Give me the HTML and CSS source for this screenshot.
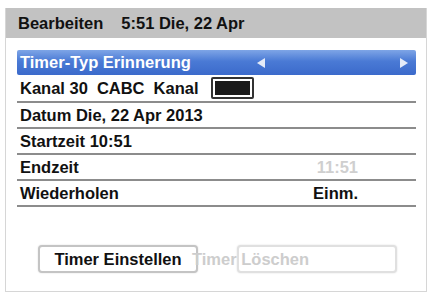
FILE: index.html
```html
<!DOCTYPE html>
<html lang="de">
<head>
    <meta charset="UTF-8">
    <meta name="viewport" content="width=device-width, initial-scale=1.0">
    <title>Timer Bearbeiten</title>
    <link rel="stylesheet" href="styles.css">
</head>
<body>

<div class="panel">
    <div class="title">Bearbeiten<span class="clock">5:51 Die, 22 Apr</span></div>

    <div class="list">
        <div class="row selected">
            <span>Timer-Typ Erinnerung</span>
            <span class="arrow arrow-left"></span>
            <span class="arrow arrow-right"></span>
        </div>
        <div class="row row-channel">
            <span>Kanal 30<span class="sp"></span>CABC<span class="sp"></span>Kanal</span>
            <span class="swatch"><span class="swatch-fill"></span></span>
        </div>
        <div class="row">
            <span>Datum Die, 22 Apr 2013</span>
        </div>
        <div class="row">
            <span>Startzeit 10:51</span>
        </div>
        <div class="row">
            <span>Endzeit</span>
            <span class="value disabled">11:51</span>
        </div>
        <div class="row">
            <span>Wiederholen</span>
            <span class="value">Einm.</span>
        </div>
    </div>

    <div class="buttons">
        <button class="btn">Timer Einstellen</button>
        <button class="btn btn-delete">Timer Löschen</button>
    </div>
</div>

</body>
</html>
```

FILE: styles.css
```css
body {
    margin: 0;
    background-color: #fff;
    font-family: "Liberation Sans", Arial, sans-serif;
    font-size: 16.5px;
    font-weight: bold;
    color: #111;
}
.panel {
    margin: 8px 4px 0 5px;
    height: 284px;
    box-sizing: border-box;
    border: 1px solid #d6d6d6;
    border-top: none;
    display: flex;
    flex-direction: column;
}
.title {
    height: 30px;
    display: flex;
    align-items: center;
    padding-left: 12px;
    background-color: #c2c2c2;
    font-size: 16.5px;
}
.clock {
    margin-left: 18px;
}
.list {
    margin-top: 12px;
    padding: 0 10px 0 11px;
}
.row {
    height: 24px;
    display: flex;
    align-items: center;
    padding-left: 3px;
    border-bottom: 2px solid #8c8c8c;
}
.row.selected {
    height: 25px;
    border-bottom: none;
    border-radius: 2px;
    color: #fff;
    background: linear-gradient(#7ea5e6, #4a7ad5 45%, #3b6acb);
}
.row-channel {
    height: 26px;
}
.sp {
    display: inline-block;
    width: 9px;
}
.arrow {
    width: 0;
    height: 0;
    border-top: 5px solid transparent;
    border-bottom: 5px solid transparent;
}
.arrow-left {
    margin-left: 66px;
    border-right: 8px solid #e4ebf8;
}
.arrow-right {
    margin-left: auto;
    margin-right: 8px;
    border-left: 8px solid #e4ebf8;
}
.swatch {
    margin-left: 13px;
    width: 43px;
    height: 22px;
    box-sizing: border-box;
    border: 2px solid #333;
    border-radius: 2px;
    padding: 2px;
    background-color: #fff;
}
.swatch-fill {
    display: block;
    height: 100%;
    background-color: #1a1a1a;
}
.value {
    margin-left: auto;
    margin-right: 58px;
}
.disabled {
    color: #cfcfcf;
}
.buttons {
    margin-top: 38px;
    display: flex;
    gap: 39px;
    padding-left: 32px;
}
.btn {
    width: 160px;
    height: 28px;
    padding: 0;
    font-family: inherit;
    font-size: 16.5px;
    font-weight: bold;
    color: #111;
    background-color: #fff;
    border: 2px solid #c4c4c4;
    border-radius: 4px;
    box-shadow: 0 0 2px #ddd;
}
.btn-delete {
    color: #cdcdcd;
    border-color: #e0e0e0;
    text-align: left;
    text-indent: -47px;
    white-space: nowrap;
}
```
